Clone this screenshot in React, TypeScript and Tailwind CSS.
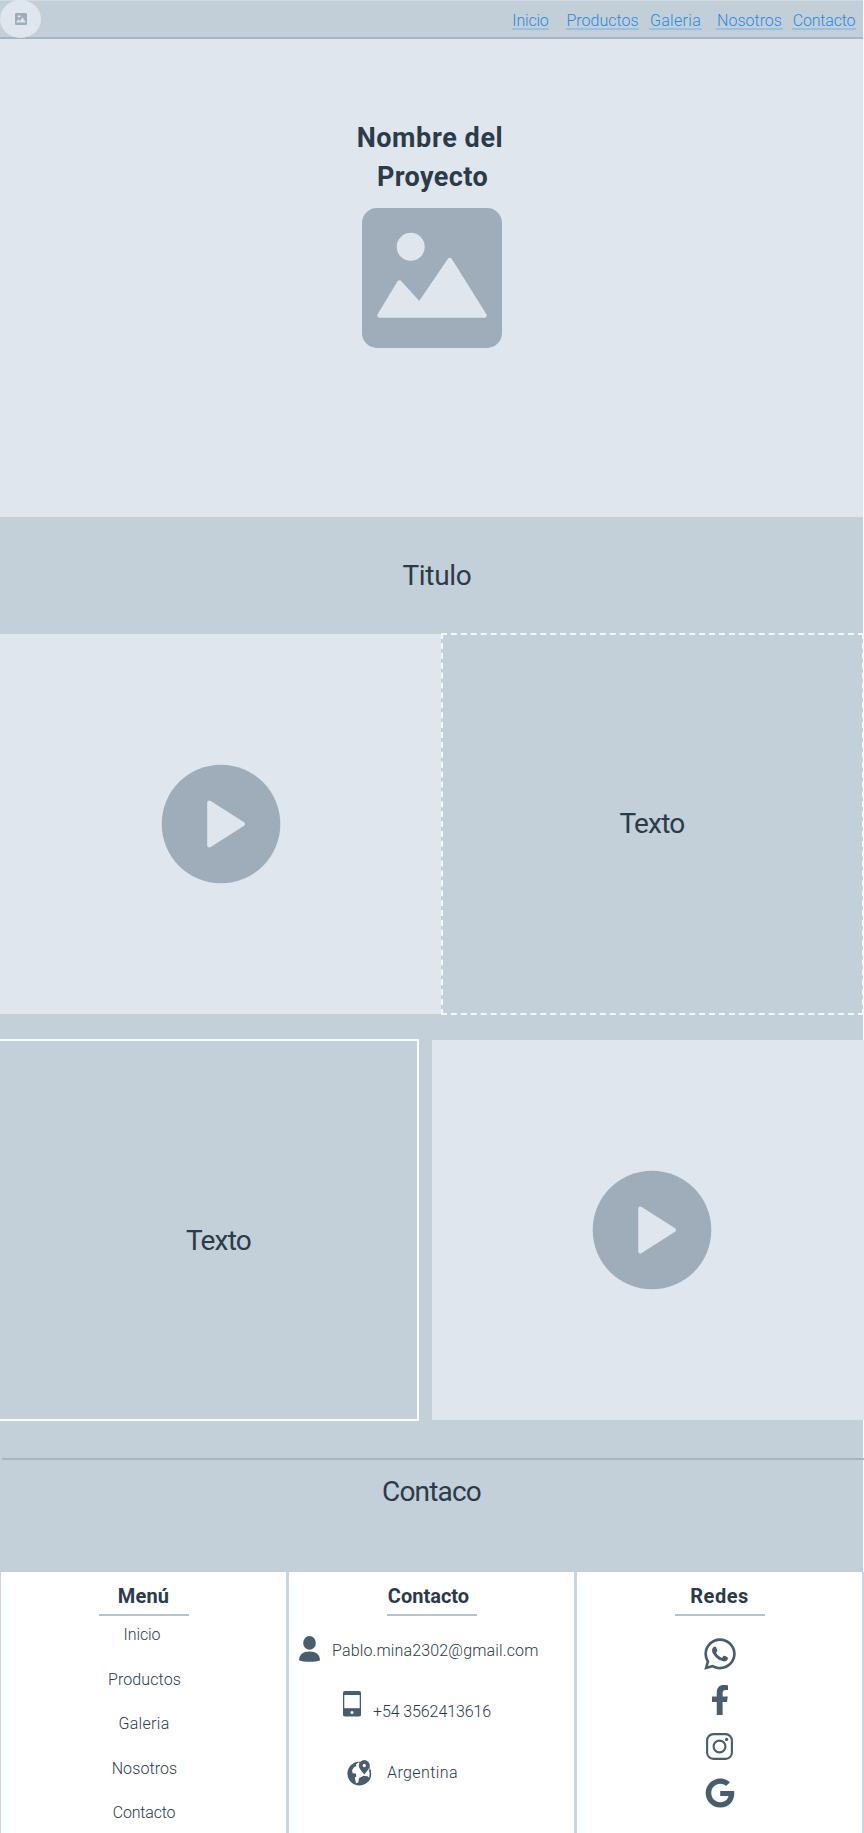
import React from "react";
import { FaFacebookF, FaGoogle, FaWhatsapp } from "react-icons/fa";

const navLinks = [
  { label: "Inicio", box: "ml-[512px] w-[37px] tracking-[-0.2px]" },
  { label: "Productos", box: "ml-[17px] w-[73px]" },
  { label: "Galeria", box: "ml-[10px] w-[53px] tracking-[0.3px]" },
  { label: "Nosotros", box: "ml-[14px] w-[67px]" },
  { label: "Contacto", box: "ml-[9px] w-[64px] tracking-[-0.2px]" },
];

const menuItems = [
  { label: "Inicio", shift: "pr-[5px] tracking-[-0.1px]" },
  { label: "Productos", shift: "tracking-[0.1px]" },
  { label: "Galeria", shift: "pr-[1px] tracking-[0.3px]" },
  { label: "Nosotros", shift: "tracking-[0.1px]" },
  { label: "Contacto", shift: "pr-[1px] tracking-[-0.2px]" },
];

function PictureIcon({ className }: { className: string }) {
  return (
    <svg viewBox="0 0 140 140" className={className} preserveAspectRatio="none">
      <rect width="140" height="140" rx="15" fill="#9eadb9" />
      <circle cx="48.7" cy="38.8" r="14" fill="#dfe6ee" />
      <path
        d="M17.5 107.500 37.500 74.500 57.500 96.500 87.800 52 122.500 107.500Z"
        fill="#dfe6ee"
        stroke="#dfe6ee"
        strokeWidth="4.500"
        strokeLinejoin="round"
      />
    </svg>
  );
}

function PlayIcon({ className }: { className: string }) {
  return (
    <svg viewBox="0 0 120 120" className={className}>
      <circle cx="60" cy="60" r="59.300" fill="#9eadb9" />
      <path
        d="M48.200 38.500V81.500L82 60Z"
        fill="#dfe6ee"
        stroke="#dfe6ee"
        strokeWidth="4"
        strokeLinejoin="round"
      />
    </svg>
  );
}

function PersonIcon({ className }: { className: string }) {
  return (
    <svg viewBox="0 0 21 26" className={className} fill="#4a5d6c">
      <ellipse cx="10.500" cy="6.900" rx="6.300" ry="6.800" />
      <path d="M0 24.300C.2 18.600 4 15.400 10.500 15.400S20.800 18.600 21 24.300C18.500 25.300 15 25.800 10.500 25.800S2.500 25.300 0 24.300Z" />
    </svg>
  );
}

function PhoneIcon({ className }: { className: string }) {
  return (
    <svg viewBox="0 0 18 26" className={className}>
      <rect width="18" height="25.500" rx="1.800" fill="#4a5d6c" />
      <rect x="1.300" y="4" width="15.400" height="13.200" fill="#fff" />
      <circle cx="9" cy="21.600" r="1.500" fill="#fff" />
    </svg>
  );
}

function GlobePinIcon({ className }: { className: string }) {
  return (
    <svg viewBox="0 0 25 26" className={className}>
      <circle cx="12.300" cy="13.600" r="11.900" fill="#4a5d6c" />
      <path
        d="M11.500 2.600 9 4.200 9.400 6 7 7.300 5 10.300 5.600 13.200 9 13.600 9.300 16.600 7.700 17.800 9 23.300 11.200 22.600 12.200 17.900 16.500 15.800 20.500 16.300 22.800 18.500 23 9 18 4Z"
        fill="#fff"
      />
      <path
        d="M22.300 9.600A11.300 11.300 0 0 1 20.500 21.500"
        fill="none"
        stroke="#4a5d6c"
        strokeWidth="1.300"
      />
      <path
        d="M17.300 14.600C14 10.700 11.800 8.100 11.800 5.600A5.500 5.500 0 0 1 22.800 5.600C22.800 8.100 20.600 10.700 17.300 14.600Z"
        fill="#4a5d6c"
      />
      <circle cx="17.300" cy="5.500" r="1.700" fill="#fff" />
    </svg>
  );
}

function InstagramIcon({ className }: { className: string }) {
  return (
    <svg viewBox="0 0 27 27" className={className} fill="none" stroke="#4a5d6c">
      <rect x="1.100" y="1.100" width="24.800" height="24.800" rx="6.300" strokeWidth="2.100" />
      <circle cx="13.500" cy="13.500" r="5.900" strokeWidth="2.100" />
      <circle cx="20.600" cy="6.400" r="1.600" fill="#4a5d6c" stroke="none" />
    </svg>
  );
}

function ColumnTitle({ title, className }: { title: string; className: string }) {
  return (
    <div className="flex flex-col items-center pt-[12px]">
      <h3 className={`text-[20px] leading-[24px] font-bold ${className}`}>{title}</h3>
      <div className="mt-[6px] h-[2px] w-[90px] bg-[#b8c5cf]" />
    </div>
  );
}

export default function App() {
  return (
    <div className="h-[1833px] w-[864px] overflow-hidden bg-[#fafbfc] font-[Roboto,'Open_Sans',sans-serif] text-[#2b3b49]">
      <div className="h-[1572px] w-[863px] bg-[#c3cfd9]">
        <header className="relative h-[39px] border-t border-b-2 border-t-[#d0dae2] border-b-[#a7b5c0] bg-[#c3cfd8]">
          <div className="absolute -top-px left-0 flex h-[38px] w-[41px] items-center justify-center rounded-[50%] bg-[#dfe6ee]">
            <PictureIcon className="h-[12px] w-[12px]" />
          </div>
          <nav className="flex pt-[9px] text-[16px] leading-[21px] font-light text-[#2b88df]">
            {navLinks.map((link) => (
              <a
                key={link.label}
                href="#"
                className={`block h-[20px] border-b-2 border-[#9bbfe0] text-center whitespace-nowrap ${link.box}`}
              >
                {link.label}
              </a>
            ))}
          </nav>
        </header>

        <section className="flex h-[478px] flex-col items-center bg-[#dfe6ee] pt-[80px]">
          <h1 className="w-[190px] text-center text-[27px] leading-[39px] font-bold">
            <span className="pr-[3px] tracking-[0.6px]">Nombre del</span>
            <br />
            <span className="pl-[2px] tracking-[0.4px]">Proyecto</span>
          </h1>
          <PictureIcon className="mt-[11px] h-[140px] w-[140px]" />
        </section>

        <section className="flex h-[116px] items-center justify-center pt-[2px] pl-[11px]">
          <h2 className="text-[28px] leading-[34px] tracking-[-0.3px]">Titulo</h2>
        </section>

        <section className="flex h-[382px] w-[864px]">
          <div className="mt-[1px] flex h-[380px] w-[441px] items-center justify-center bg-[#dfe6ee]">
            <PlayIcon className="h-[120px] w-[120px]" />
          </div>
          <div className="flex h-[382px] w-[423px] items-center justify-center border-2 border-dashed border-[#f4f7f9]">
            <span className="pr-[1px] text-[28px] leading-[34px] tracking-[-0.8px]">Texto</span>
          </div>
        </section>

        <section className="mt-[24px] flex h-[382px] w-[864px] justify-between">
          <div className="flex h-[382px] w-[419px] items-center justify-center border-2 border-l-0 border-[#f9fbfc] pt-[21px] pl-[20px]">
            <span className="text-[28px] leading-[34px] tracking-[-0.8px]">Texto</span>
          </div>
          <div className="mt-[1px] flex h-[380px] w-[432px] items-center justify-center bg-[#dfe6ee] pl-[8px]">
            <PlayIcon className="h-[120px] w-[120px]" />
          </div>
        </section>

        <section className="mt-[37px] ml-[2px] w-[862px] border-t-2 border-[#a7b5c0] pt-[15px] pr-[3px] text-center">
          <h2 className="text-[28px] leading-[34px] tracking-[-0.8px]">Contaco</h2>
        </section>
      </div>

      <footer className="flex h-[261px] gap-[3px] bg-[#c9d6e0] pr-[2px] pl-px">
        <div className="w-[285px] bg-white">
          <ColumnTitle title="Menú" className="tracking-[0.2px]" />
          <ul className="flex flex-col items-center gap-[20.6px] pt-[7px] pl-[2px] text-[16px] leading-[24px] font-light">
            {menuItems.map((item) => (
              <li key={item.label} className={item.shift}>
                {item.label}
              </li>
            ))}
          </ul>
        </div>

        <div className="w-[285px] bg-white">
          <ColumnTitle title="Contacto" className="pr-[6px]" />
          <div className="flex flex-col text-[16px] leading-[24px] font-light whitespace-nowrap">
            <div className="mt-[20px] ml-[10px] flex h-[26px]">
              <PersonIcon className="h-[26px] w-[21px]" />
              <span className="mt-[3px] ml-[12px] tracking-[0.15px]">Pablo.mina2302@gmail.com</span>
            </div>
            <div className="mt-[29px] ml-[54px] flex h-[26px]">
              <PhoneIcon className="h-[26px] w-[18px]" />
              <span className="mt-[9px] ml-[12px] tracking-[-0.100px]">+54 3562413616</span>
            </div>
            <div className="mt-[43px] ml-[58px] flex h-[26px]">
              <GlobePinIcon className="h-[26px] w-[25px]" />
              <span className="mt-[1px] ml-[15px] tracking-[0.400px]">Argentina</span>
            </div>
          </div>
        </div>

        <div className="w-[285px] bg-white">
          <ColumnTitle title="Redes" className="tracking-[0.5px]" />
          <div className="flex flex-col items-center text-[#4a5d6c]">
            <FaWhatsapp className="mt-[20px] h-[36px] w-[36px]" />
            <FaFacebookF className="mt-[13px] h-[30px] w-[20px]" />
            <InstagramIcon className="mt-[18px] h-[27px] w-[27px]" />
            <FaGoogle className="mt-[18px] h-[30px] w-[30px]" />
          </div>
        </div>
      </footer>
    </div>
  );
}
